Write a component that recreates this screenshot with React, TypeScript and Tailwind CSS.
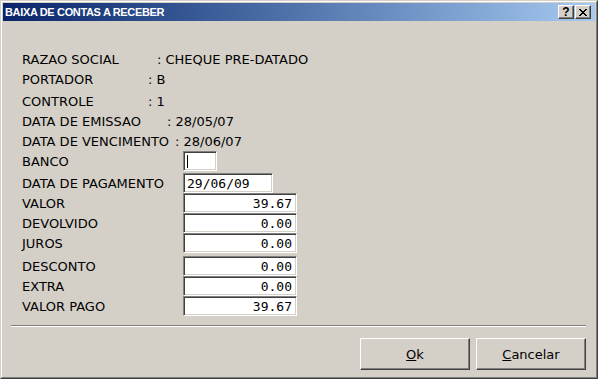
import React from 'react';

const face = "font-['DejaVu_Sans',sans-serif]";

const sunken =
  "border border-t-[#808080] border-l-[#808080] border-b-white border-r-white shadow-[inset_1px_1px_0_#404040,inset_-1px_-1px_0_#d4d0c8] bg-white";
const raised =
  "border border-t-white border-l-white border-b-[#404040] border-r-[#404040] shadow-[inset_-1px_-1px_0_#808080] bg-[#d4d0c8]";

// --- read-only info rows ---
const info = [
  { label: 'RAZAO SOCIAL', value: 'CHEQUE PRE-DATADO', w: 'w-[135px]', mt: '' },
  { label: 'PORTADOR', value: 'B', w: 'w-[126px]', mt: '' },
  { label: 'CONTROLE', value: '1', w: 'w-[126px]', mt: 'mt-[2px]' },
  { label: 'DATA DE EMISSAO', value: '28/05/07', w: 'w-[145px]', mt: '' },
  { label: 'DATA DE VENCIMENTO', value: '28/06/07', w: 'w-[153px]', mt: '' },
];

// --- editable rows ---
const fields = [
  { label: 'VALOR', value: '39.67', mt: '' },
  { label: 'DEVOLVIDO', value: '0.00', mt: '' },
  { label: 'JUROS', value: '0.00', mt: '' },
  { label: 'DESCONTO', value: '0.00', mt: 'mt-[3px]' },
  { label: 'EXTRA', value: '0.00', mt: '' },
  { label: 'VALOR PAGO', value: '39.67', mt: '' },
];

const mono = "font-['DejaVu_Sans_Mono',monospace] text-[13px] text-black leading-none";

export default function App() {
  return (
    <div className="w-[598px] h-[379px] border border-t-[#d4d0c8] border-l-[#d4d0c8] border-b-[#404040] border-r-[#404040]">
      <div className="w-full h-full border border-t-white border-l-white border-b-[#808080] border-r-[#808080] bg-[#d4d0c8] p-px flex flex-col">
        {/* title bar */}
        <div className="h-[18px] flex items-center bg-gradient-to-r from-[#0a246a] to-[#a6caf0] pl-[2px] pr-[4px]">
          <span className="font-['Liberation_Sans',sans-serif] font-bold text-[11px] tracking-[-0.35px] text-white leading-none">
            BAIXA DE CONTAS A RECEBER
          </span>
          <div className="ml-auto flex gap-[1px]">
            <div className={`${raised} w-[16px] h-[14px] flex items-center justify-center`}>
              <span className="font-['Liberation_Sans',sans-serif] font-bold text-[12px] leading-none text-black">?</span>
            </div>
            <div className={`${raised} w-[16px] h-[14px] flex items-center justify-center`}>
              <svg width="8" height="7" viewBox="0 0 8 7" shapeRendering="crispEdges">
                <path d="M0 0h2v1H0zM6 0h2v1H6zM1 1h2v1H1zM5 1h2v1H5zM2 2h4v1H2zM3 3h2v1H3zM2 4h4v1H2zM1 5h2v1H1zM5 5h2v1H5zM0 6h2v1H0zM6 6h2v1H6z" fill="#000" />
              </svg>
            </div>
          </div>
        </div>

        {/* form */}
        <div className={`${face} text-[13px] text-black leading-none pt-[28px] pl-[19px] flex flex-col`}>
          {info.map((r) => (
            <div key={r.label} className={`h-[20px] flex items-center whitespace-nowrap ${r.mt}`}>
              <span className={`${r.w} flex-none`}>{r.label}</span>
              <span>: {r.value}</span>
            </div>
          ))}

          <div className="h-[20px] flex items-center">
            <span className="w-[161px] flex-none">BANCO</span>
            <div className={`${sunken} w-[34px] h-[20px] flex items-center pl-[3px]`}>
              <div className="w-px h-[13px] bg-black" />
            </div>
          </div>

          <div className="h-[20px] flex items-center mt-[2px]">
            <span className="w-[161px] flex-none">DATA DE PAGAMENTO</span>
            <div className={`${sunken} w-[90px] h-[20px] flex items-center pl-[3px]`}>
              <span className={mono}>29/06/09</span>
            </div>
          </div>

          {fields.map((f) => (
            <div key={f.label} className={`h-[20px] flex items-center ${f.mt}`}>
              <span className="w-[161px] flex-none">{f.label}</span>
              <div className={`${sunken} w-[114px] h-[20px] flex items-center justify-end pr-[4px]`}>
                <span className={mono}>{f.value}</span>
              </div>
            </div>
          ))}
        </div>

        {/* separator */}
        <div className="mt-[9px] ml-[8px] w-[575px] border-t border-t-[#808080] border-b border-b-white" />

        {/* buttons */}
        <div className={`${face} mt-[11px] flex justify-end gap-[6px] pr-[9px] text-[13px] text-black`}>
          <button className={`${raised} w-[110px] h-[32px] flex items-center justify-center leading-none`}>
            <span><span className="underline">O</span>k</span>
          </button>
          <button className={`${raised} w-[110px] h-[32px] flex items-center justify-center leading-none`}>
            <span><span className="underline">C</span>ancelar</span>
          </button>
        </div>
      </div>
    </div>
  );
}
